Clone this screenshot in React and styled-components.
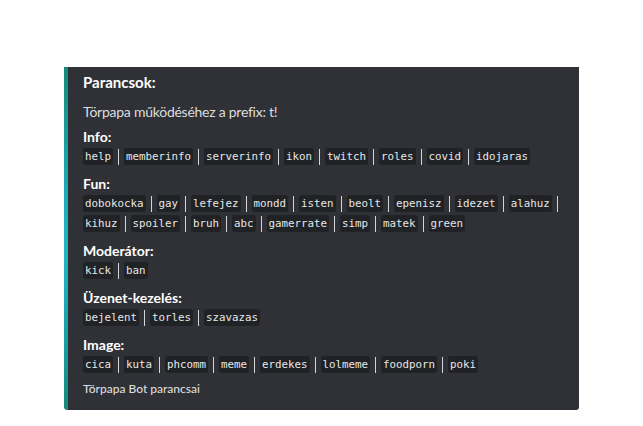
import React from 'react';
import { styled, createGlobalStyle } from 'styled-components';

const GlobalStyle = createGlobalStyle`
  html,
  body {
    margin: 0;
    background: #ffffff;
  }
`;

const Page = styled.div`
  padding: 67px 0 0 64px;
  font-family: Lato, 'Noto Sans', sans-serif;
`;

const Embed = styled.div`
  width: 515px;
  display: flex;

  background: #2f3136;
  border-radius: 0 0 3px 4px;
  overflow: hidden;
`;

const Accent = styled.div`
  flex: 0 0 4px;
  background: linear-gradient(180deg, #158a7b 0%, #1fa9b3 35%, #22b5c3 55%, #1a9da4 80%, #148a7a 100%);
`;

const Body = styled.div`
  flex: 1;
  padding: 5px 16px 13px 15px;

  display: flex;
  flex-direction: column;
`;

const Title = styled.div`
  font-size: 15px;
  font-weight: 700;
  line-height: 20px;
  color: #ffffff;
`;

const Description = styled.div`
  margin-top: 11px;

  font-size: 14px;
  line-height: 18px;
  letter-spacing: -0.25px;
  color: #dcddde;
`;

const Field = styled.div`
  margin-top: ${(p) => (p.$first ? '7px' : '10px')};
`;

const FieldName = styled.div`
  font-size: 14px;
  font-weight: 700;
  line-height: 18px;
  color: #ffffff;
`;

const Values = styled.div`
  margin-top: 2px;

  display: flex;
  flex-wrap: wrap;
  row-gap: 3px;
`;

const Item = styled.span`
  display: inline-flex;
  align-items: center;
`;

const Code = styled.code`
  display: inline-block;
  height: 17px;
  padding: 0 2px;

  font-family: 'DejaVu Sans Mono', 'Liberation Mono', monospace;
  font-size: 10.8px;
  line-height: 17px;
  color: #e6e7e8;

  background: #202225;
  border-radius: 3px;
`;

const Sep = styled.span`
  display: inline-block;
  width: 11px;
  height: 17px;

  position: relative;

  &::after {
    content: '';
    position: absolute;
    left: 5px;
    top: 1px;
    bottom: 0;
    width: 1px;
    background: #d4d5d7;
  }
`;

const Footer = styled.div`
  margin-top: 8px;

  font-size: 12px;
  font-weight: 500;
  line-height: 16px;
  color: #dcddde;
`;

const fields = [
  {
    name: 'Info:',
    values: ['help', 'memberinfo', 'serverinfo', 'ikon', 'twitch', 'roles', 'covid', 'idojaras'],
  },
  {
    name: 'Fun:',
    values: [
      'dobokocka', 'gay', 'lefejez', 'mondd', 'isten', 'beolt', 'epenisz', 'idezet', 'alahuz',
      'kihuz', 'spoiler', 'bruh', 'abc', 'gamerrate', 'simp', 'matek', 'green',
    ],
  },
  { name: 'Moderátor:', values: ['kick', 'ban'] },
  { name: 'Üzenet-kezelés:', values: ['bejelent', 'torles', 'szavazas'] },
  {
    name: 'Image:',
    values: ['cica', 'kuta', 'phcomm', 'meme', 'erdekes', 'lolmeme', 'foodporn', 'poki'],
  },
];

const App = () => {
  return (
    <>
      <GlobalStyle />
      <Page>
        <Embed>
          <Accent />
          <Body>
            <Title>Parancsok:</Title>
            <Description>Törpapa működéséhez a prefix: t!</Description>

            {fields.map((field, i) => (
              <Field key={field.name} $first={i === 0}>
                <FieldName>{field.name}</FieldName>
                <Values>
                  {field.values.map((v, j) => (
                    <Item key={v}>
                      <Code>{v}</Code>
                      {j < field.values.length - 1 && <Sep />}
                    </Item>
                  ))}
                </Values>
              </Field>
            ))}

            <Footer>Törpapa Bot parancsai</Footer>
          </Body>
        </Embed>
      </Page>
    </>
  );
};

export default App;
